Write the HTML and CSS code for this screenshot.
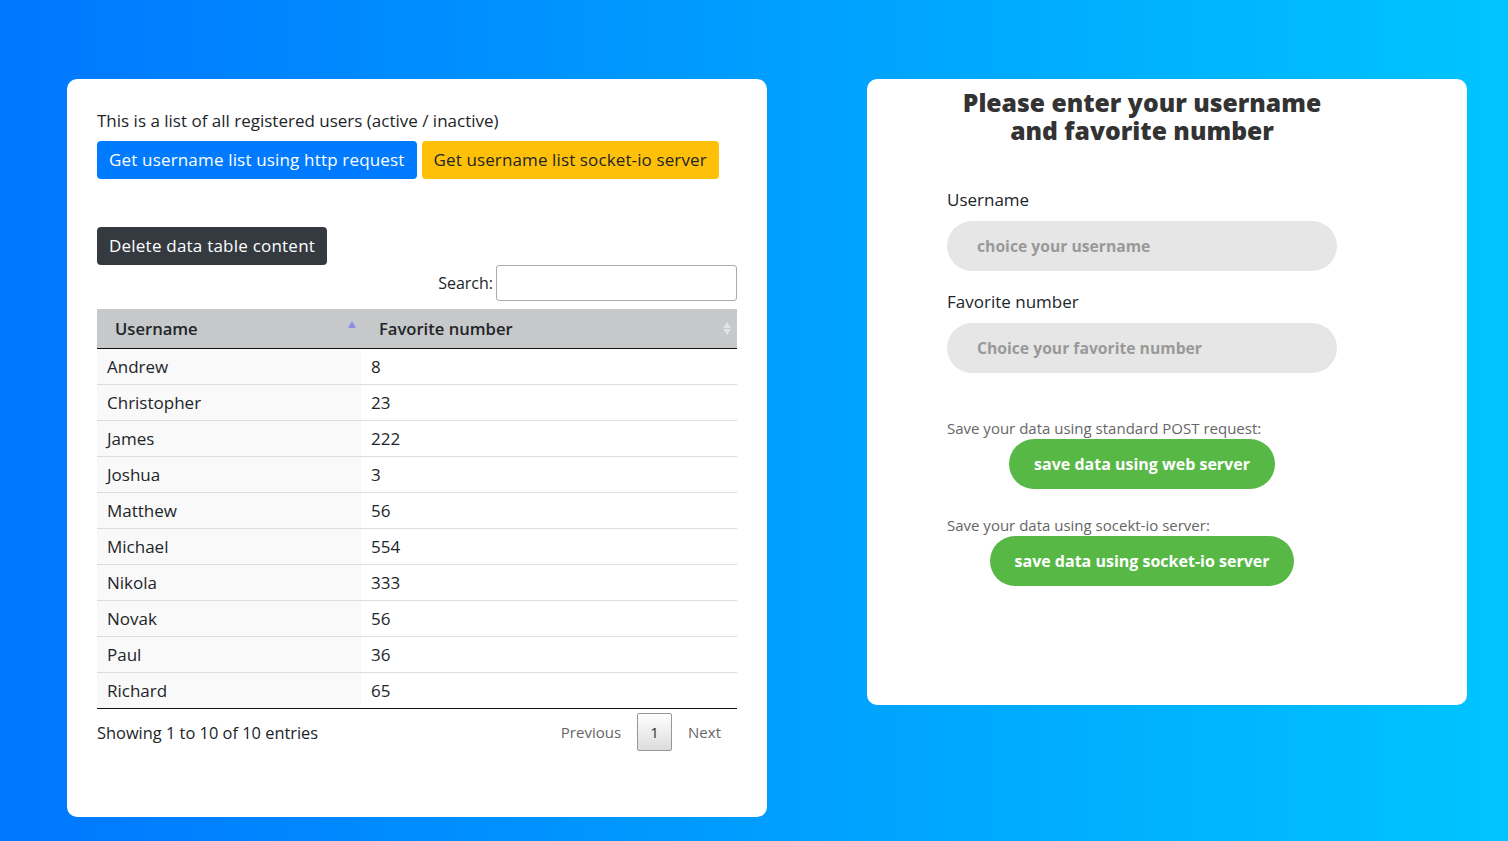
FILE: index.html
```html
<!DOCTYPE html>
<html>
<head>
<meta charset="utf-8">
<link rel="stylesheet" href="styles.css">
</head>
<body>
<div class="page">
  <div class="card card-left">
    <p class="intro">This is a list of all registered users (active / inactive)</p>
    <div class="btn-row">
      <button class="btn btn-blue">Get username list using http request</button>
      <button class="btn btn-yellow">Get username list socket-io server</button>
    </div>
    <button class="btn btn-dark">Delete data table content</button>
    <div class="search-row">
      <label class="search-label">Search:</label>
      <input class="search-input" type="text">
    </div>
    <table class="data">
      <thead>
        <tr>
          <th class="col1">Username<span class="sort-up"></span></th>
          <th class="col2">Favorite number<span class="sort-both"><span class="su"></span><span class="sd"></span></span></th>
        </tr>
      </thead>
      <tbody>
        <tr><td class="c1">Andrew</td><td>8</td></tr>
        <tr><td class="c1">Christopher</td><td>23</td></tr>
        <tr><td class="c1">James</td><td>222</td></tr>
        <tr><td class="c1">Joshua</td><td>3</td></tr>
        <tr><td class="c1">Matthew</td><td>56</td></tr>
        <tr><td class="c1">Michael</td><td>554</td></tr>
        <tr><td class="c1">Nikola</td><td>333</td></tr>
        <tr><td class="c1">Novak</td><td>56</td></tr>
        <tr><td class="c1">Paul</td><td>36</td></tr>
        <tr><td class="c1">Richard</td><td>65</td></tr>
      </tbody>
    </table>
    <div class="table-foot">
      <div class="info">Showing 1 to 10 of 10 entries</div>
      <div class="pager">
        <span class="pg-link">Previous</span>
        <span class="pg-current">1</span>
        <span class="pg-link">Next</span>
      </div>
    </div>
  </div>
  <div class="card card-right">
    <div class="form">
      <h1 class="title"><span class="tline">Please enter your username</span><span class="tline">and favorite number</span></h1>
      <label class="field-label">Username</label>
      <input class="pill-input" type="text" placeholder="choice your username">
      <label class="field-label">Favorite number</label>
      <input class="pill-input" type="text" placeholder="Choice your favorite number">
      <p class="save-note note-first">Save your data using standard POST request:</p>
      <div class="center"><button class="green-btn">save data using web server</button></div>
      <p class="save-note">Save your data using socekt-io server:</p>
      <div class="center"><button class="green-btn">save data using socket-io server</button></div>
    </div>
  </div>
</div>
</body>
</html>
```

FILE: styles.css
```css
* { box-sizing: border-box; }
html, body { margin: 0; padding: 0; }
body {
  width: 1508px;
  height: 841px;
  overflow: hidden;
  background: linear-gradient(to right, #0077ff, #00c4ff);
  font-family: "Open Sans", "Liberation Sans", sans-serif;
  color: #212529;
}
.page {
  display: flex;
  align-items: flex-start;
  gap: 100px;
  padding: 79px 0 0 67px;
}
.card {
  background: #fff;
  border-radius: 10px;
}
.card-left {
  width: 700px;
  height: 738px;
  padding: 30px 30px 0 30px;
}
.intro {
  margin: 0 0 9px 0;
  font-size: 17px;
  line-height: 22px;
  padding-top: 1px;
}
.btn-row { display: flex; gap: 5px; }
.btn {
  font-family: inherit;
  font-size: 17px;
  line-height: 24px;
  padding: 7px 12px;
  height: 38px;
  border: none;
  border-radius: 4px;
  cursor: pointer;
}
.btn-blue { background: #007bff; color: #fff; letter-spacing: 0.17px; }
.btn-yellow { background: #ffc107; color: #212529; letter-spacing: 0.12px; }
.btn-dark { background: #343a40; color: #fff; margin-top: 48px; display: block; letter-spacing: 0.22px; }
.search-row {
  display: flex;
  justify-content: flex-end;
  align-items: center;
  gap: 3px;
}
.search-label { font-size: 16px; }
.search-input {
  width: 241px;
  height: 36px;
  border: 1px solid #aaa;
  border-radius: 3px;
  padding: 5px;
  font-family: inherit;
}
.data {
  width: 640px;
  margin-top: 8px;
  border-collapse: collapse;
  font-size: 17px;
}
.data th {
  position: relative;
  text-align: left;
  background: #c6c8ca;
  font-weight: 600;
  font-size: 16.6px;
  padding: 10px 18px;
  line-height: 19px;
  border-bottom: 1px solid #111;
}
.data th.col1 { width: 264px; }
.data td {
  padding: 8px 10px;
  line-height: 19px;
  border-top: 1px solid #ddd;
}
.data tbody tr:first-child td { border-top: none; }
.data tbody tr:last-child td { border-bottom: 1px solid #111; }
.data td.c1 { background: #f9f9f9; }
.sort-up {
  position: absolute;
  right: 5px;
  top: 12px;
  width: 0; height: 0;
  border-left: 4px solid transparent;
  border-right: 4px solid transparent;
  border-bottom: 7px solid #8c8ce6;
}
.sort-both {
  position: absolute;
  right: 6px;
  top: 13px;
  display: flex;
  flex-direction: column;
  gap: 1px;
}
.sort-both .su, .sort-both .sd {
  width: 0; height: 0;
  border-left: 4px solid transparent;
  border-right: 4px solid transparent;
}
.sort-both .su { border-bottom: 6px solid #e2e3e4; }
.sort-both .sd { border-top: 6px solid #e2e3e4; }
.table-foot {
  display: flex;
  justify-content: space-between;
  align-items: center;
  padding-top: 4px;
}
.info { font-size: 16.4px; }
.pager { display: flex; align-items: center; }
.pg-link {
  font-size: 15px;
  color: #666;
  padding: 0 16px;
}
.pg-current {
  display: inline-flex;
  align-items: center;
  justify-content: center;
  width: 35px;
  height: 38px;
  font-size: 15px;
  color: #333;
  border: 1px solid #979797;
  border-radius: 2px;
  background: linear-gradient(to bottom, #fff 0%, #dcdcdc 100%);
}
.card-right {
  width: 600px;
  height: 626px;
  padding: 10px 0 0 80px;
}
.form { width: 390px; display: flex; flex-direction: column; }
.title {
  margin: 0 0 45px 0;
  text-align: center;
  font-size: 24.7px;
  line-height: 28px;
  font-weight: 800;
  color: #333;
}
.tline { display: block; height: 28px; }
.field-label {
  font-size: 17px;
  line-height: 20px;
  margin-bottom: 11px;
}
.pill-input {
  height: 50px;
  border: none;
  border-radius: 25px;
  background: #e6e6e6;
  padding: 0 30px;
  font-family: inherit;
  font-size: 15.7px;
  font-weight: 700;
  margin-bottom: 21px;
  outline: none;
}
.pill-input::placeholder { color: #999; opacity: 1; }
.save-note {
  margin: 26px 0 1px 0;
  font-size: 15px;
  line-height: 20px;
  color: #666;
}
.note-first { margin-top: 24px; }
.center { display: flex; justify-content: center; }
.green-btn {
  height: 50px;
  border: none;
  border-radius: 25px;
  background: #57b846;
  color: #fff;
  font-family: inherit;
  font-size: 16px;
  font-weight: 700;
  padding: 0 25px;
  cursor: pointer;
}
```
